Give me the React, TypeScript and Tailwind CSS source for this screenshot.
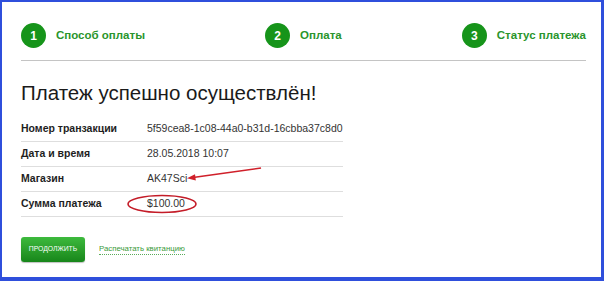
import React from "react";

const steps = [
  { n: "1", label: "Способ оплаты" },
  { n: "2", label: "Оплата" },
  { n: "3", label: "Статус платежа" },
];

const rows = [
  { k: "Номер транзакции", v: "5f59cea8-1c08-44a0-b31d-16cbba37c8d0" },
  { k: "Дата и время", v: "28.05.2018 10:07" },
  { k: "Магазин", v: "AK47Sci" },
  { k: "Сумма платежа", v: "$100.00" },
];

export default function App() {
  return (
    <div
      className="relative w-[604px] h-[281px] bg-white border-l-2 border-t-2 border-r-[3px] border-b-[4px] border-[#2f4fdc] overflow-hidden"
      style={{ fontFamily: '"Liberation Sans", Arial, sans-serif' }}
    >
      <div className="pl-[19px] pr-[15px] pt-[21px]">
        <div className="flex justify-between items-center h-[25px]">
          {steps.map((s) => (
            <div key={s.n} className="flex items-center gap-[10px]">
              <div className="w-[25px] h-[25px] rounded-full bg-[#16941a] text-white text-[12px] font-bold flex items-center justify-center">
                {s.n}
              </div>
              <span className="text-[11.5px] font-bold text-[#2a952c] whitespace-nowrap">{s.label}</span>
            </div>
          ))}
        </div>
        <div className="mt-[12px] h-px bg-[#c4c4c4]" />
        <h1 className="mt-[19px] text-[20.5px] leading-[26px] text-[#1a1a1a] whitespace-nowrap">Платеж успешно осуществлён!</h1>
        <div className="mt-[11px] w-[322px]">
          {rows.map((r) => (
            <div key={r.k} className="flex items-center h-[25px] border-b border-[#dedede]">
              <div className="w-[126px] shrink-0 whitespace-nowrap text-[10.5px] font-bold text-[#1e1e1e]">{r.k}</div>
              <div className="whitespace-nowrap text-[10.5px] text-[#333]">{r.v}</div>
            </div>
          ))}
        </div>
        <div className="mt-[20px] flex items-center gap-[14px]">
          <button className="w-[64px] h-[25px] rounded-[3px] bg-gradient-to-b from-[#3dba3d] to-[#17861a] text-white text-[6.8px] shadow-[0_1px_1px_rgba(0,0,0,0.25)]">
            ПРОДОЛЖИТЬ
          </button>
          <span className="text-[7.8px] text-[#3a9a3a] border-b border-dotted border-[#5aaa5a] leading-[10px] whitespace-nowrap">
            Распечатать квитанцию
          </span>
        </div>
      </div>
      <svg className="absolute left-[-2px] top-[-2px] pointer-events-none" width="604" height="281">
        <line x1="261" y1="168" x2="193" y2="177.5" stroke="#d0202a" strokeWidth="1.6" />
        <polygon points="187,178.3 195,174.2 195.8,180.5" fill="#d0202a" />
        <ellipse cx="162" cy="204" rx="34" ry="8.5" fill="none" stroke="#c41c28" strokeWidth="1.6" />
      </svg>
    </div>
  );
}
